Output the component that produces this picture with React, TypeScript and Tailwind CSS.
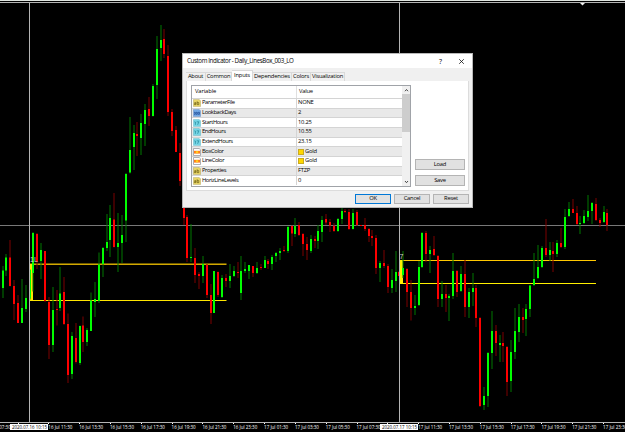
import { clsx } from "clsx";

// up?, high, body top, body bottom, low
const candles: [number, number, number, number, number][] = [
  [1, 266, 270.5, 288, 298], [1, 254, 257.5, 270.5, 276], [0, 240, 257.5, 286, 286.5], [0, 280, 286, 304, 320],
  [0, 295, 303, 323, 323], [1, 279, 308, 323, 323], [1, 285, 298, 309, 312], [1, 269.5, 270, 298, 299.5],
  [1, 232, 233, 273, 291.5], [0, 233, 234, 262, 269], [1, 243, 250, 261, 279], [0, 251, 251, 301, 302],
  [0, 297, 302, 345, 359], [1, 287, 310, 345, 352], [0, 290, 309, 310, 325.5], [1, 267, 293.5, 308, 311],
  [0, 277, 292, 324, 325], [0, 313.5, 324, 375, 383], [1, 332, 336, 374, 379], [0, 323, 338, 362, 363.5],
  [1, 325.5, 326, 363, 365], [0, 316.5, 325.5, 342, 352], [1, 328, 330, 342, 346], [1, 292.5, 300.5, 331, 331],
  [1, 282, 299, 302, 317], [1, 252.5, 264.5, 301, 303], [1, 247, 248, 264, 277], [1, 214, 242, 248, 251],
  [1, 205, 218, 240, 257], [0, 193, 219.5, 247, 247.5], [1, 213, 243, 247, 272], [1, 215, 235, 243, 263],
  [1, 173, 174, 220.5, 242], [1, 117, 150, 172.5, 173.5], [1, 125, 133, 147, 170], [0, 122, 134, 136, 156],
  [1, 114, 123, 138, 155], [1, 104, 110, 124, 146], [0, 97, 109, 116, 126], [1, 84, 86, 116, 116.5],
  [1, 36, 49, 85, 99], [1, 25, 40, 48, 61], [0, 29, 39, 54, 58], [0, 45, 56, 112, 116],
  [0, 109, 112, 131, 136], [0, 126, 130, 152, 152], [0, 143, 153, 181, 186], [0, 185, 190, 218, 225],
  [0, 215, 217, 258, 262], [1, 224, 257, 258, 262], [0, 248, 258, 275, 283], [0, 272, 274, 276, 289],
  [1, 256, 264, 276, 283], [0, 264, 265, 295, 298], [0, 284, 295, 313, 324], [1, 271, 271, 313, 313],
  [0, 271.5, 272, 295, 297], [1, 275, 278, 297, 298], [0, 274, 278, 281, 287], [1, 264, 276, 281, 288],
  [1, 266, 271, 276, 277], [0, 262, 272, 273, 278], [1, 256, 271, 293, 300], [1, 262, 269, 271, 273],
  [1, 265, 265, 271, 279], [0, 266, 266, 273, 277], [1, 262, 268, 273, 274], [0, 264, 267, 268, 270],
  [1, 256, 260, 268, 268], [0, 259, 261, 264, 269], [1, 255, 257, 264, 270], [1, 252, 253, 256, 262],
  [1, 248, 251, 253, 260], [0, 246, 250, 251, 252], [1, 226, 227, 251, 253], [0, 225.5, 226, 233.5, 246],
  [1, 218, 226, 234, 237], [0, 222, 225, 235, 236], [0, 233, 234, 244, 256], [0, 237, 244, 250, 260],
  [1, 235, 239, 251, 253], [0, 236, 239, 241, 248], [1, 225, 231, 241, 249], [1, 216, 220, 232, 242],
  [0, 214, 219, 222.5, 225], [0, 219, 222, 225.5, 232], [0, 223, 226, 231, 232], [1, 218, 219, 231, 232],
  [1, 208, 211, 219, 224], [0, 209, 211, 212, 213], [0, 209, 212, 229, 230], [1, 209, 213, 229, 229.5],
  [0, 210, 212, 225, 226], [0, 225, 225, 226, 226], [0, 218, 225, 229, 231], [0, 228, 229, 236, 242],
  [0, 230, 236, 238, 246], [0, 235, 238, 268, 274], [1, 261, 263, 268, 282], [0, 250, 263, 266, 268],
  [0, 264, 266, 287, 293], [1, 269, 280, 288, 293], [1, 251, 272, 281, 292], [0, 271, 272, 276, 276],
  [1, 251, 268, 275, 278], [0, 268, 269, 292, 307], [0, 280, 292, 308, 320.5], [1, 295, 306, 308, 315],
  [1, 261, 267, 305, 306], [1, 232, 233, 267, 268], [0, 231, 233, 254, 262], [1, 246, 250, 254, 273],
  [0, 236, 249, 255, 256], [0, 255, 256, 299, 307], [1, 281, 294, 299, 307], [0, 285, 294, 298, 312],
  [1, 294, 296, 298, 321], [1, 253, 271, 296, 299], [0, 270, 271, 292, 297], [1, 266, 274, 291, 292],
  [0, 260, 274, 307, 317], [1, 288, 292, 307, 318], [1, 273, 288, 292, 306], [0, 285, 288, 318, 327],
  [0, 317, 318, 406, 407], [1, 387, 396, 405, 410], [1, 352, 353, 396, 407], [1, 311, 331, 353, 369],
  [0, 325, 331, 343, 356], [1, 335, 343, 345, 362], [0, 332, 343, 346, 362], [0, 346, 347, 382, 396],
  [1, 340, 352, 381, 392], [1, 308, 331, 352, 359], [1, 304, 317, 332, 342], [0, 308, 317, 320, 333],
  [1, 304, 309, 319, 336], [1, 285, 285.5, 309, 317], [1, 253, 279, 285, 286], [1, 245, 267, 278, 279],
  [1, 246, 248, 267, 268], [0, 219, 248, 255, 257], [1, 242, 250, 255, 261], [0, 242, 251, 254, 272],
  [1, 240, 243, 254, 257], [0, 228, 243, 247, 248], [1, 209, 217, 247, 249], [1, 202, 209, 216, 217],
  [0, 199, 209, 213, 213], [0, 206, 213, 224, 225], [1, 216, 223, 224, 234], [1, 210, 216, 223, 224],
  [1, 195, 211, 217, 221], [1, 202, 203, 211, 224], [0, 198, 204, 220, 221], [0, 218, 220, 223, 227],
  [1, 206, 212, 222, 223], [0, 209, 213, 225, 231],
];

const timeLabels = [
  "16 Jul 07:30", "", "16 Jul 11:30", "16 Jul 13:30", "16 Jul 15:30", "16 Jul 17:30", "16 Jul 19:30",
  "16 Jul 21:30", "16 Jul 23:30", "17 Jul 01:30", "17 Jul 03:30", "17 Jul 05:30", "17 Jul 07:30", "",
  "17 Jul 11:30", "17 Jul 13:30", "17 Jul 15:30", "17 Jul 17:30", "17 Jul 19:30", "17 Jul 21:30", "17 Jul 23:30",
];

const tabs = [
  { label: "About", width: "w-[20px]" },
  { label: "Common", width: "w-[26px]" },
  { label: "Inputs", width: "w-[21px]", active: true },
  { label: "Dependencies", width: "w-[39px]" },
  { label: "Colors", width: "w-[19px]" },
  { label: "Visualization", width: "w-[34px]" },
];

const inputs = [
  { kind: "ab", name: "ParameterFile", value: "NONE" },
  { kind: "int", name: "LookbackDays", value: "2" },
  { kind: "num", name: "StartHours", value: "10.25" },
  { kind: "num", name: "EndHours", value: "10.55" },
  { kind: "num", name: "ExtendHours", value: "23.15" },
  { kind: "color", name: "BoxColor", value: "Gold" },
  { kind: "color", name: "LineColor", value: "Gold" },
  { kind: "ab", name: "Properties", value: "FTZP" },
  { kind: "ab", name: "HorizLineLevels", value: "0" },
];

const TypeIcon = ({ kind }: { kind: string }) => {
  if (kind === "color") {
    return (
      <svg className="w-2 h-2 shrink-0" viewBox="0 0 8 8">
        <path d="M.5.5h5.7l1.3 1.3v5.7h-7z" fill="#fff" stroke="#8c8c94" strokeWidth=".7" />
        <rect x="1" y="2.8" width="6" height="2.8" fill="#ff7a1c" />
        <rect x="2.8" y="3.2" width="2.4" height="2" fill="#ffd21c" />
      </svg>
    );
  }
  const fill = kind === "ab" ? "#e9d667" : kind === "int" ? "#72a9e6" : "#75d5e5";
  const ink = kind === "ab" ? "#5c4f08" : kind === "int" ? "#123f8c" : "#12778c";
  return (
    <svg className="w-2 h-2 shrink-0" viewBox="0 0 8 8">
      <path d="M.4.4h5.8l1.4 1.4v5.8H.4z" fill={fill} stroke={ink} strokeOpacity=".35" strokeWidth=".6" />
      {kind === "ab" && <path d="M1.4 3.6h1.5v2H1.4v-1h1.5M4.2 2.3v3.3h1.6V3.6H4.2" fill="none" stroke={ink} strokeWidth=".6" />}
      {kind === "int" && <path d="M1 3.3h1v2H1M2.8 5.3v-2h1.4v2zM5 3.3h1.5v2H5z" fill="none" stroke={ink} strokeWidth=".6" />}
      {kind === "num" && <path d="M1.4 2.8l1 .2v2.8M3.7 2.8h2.2L4.6 5.8" fill="none" stroke={ink} strokeWidth=".6" />}
    </svg>
  );
};

const DialogButton = ({ label, className }: { label: string; className: string }) => (
  <button type="button" className={clsx("flex items-center justify-center bg-[#e1e1e1] border leading-none", className)}>
    {label}
  </button>
);

const Chart = () => (
  <svg className="block w-[625px] h-[432px]" viewBox="0 0 625 432">
    <rect width="625" height="1" fill="#dfe4df" />
    <rect y="2" width="625" height="1" fill="#b4b4b4" />
    <path d="M580 3h5l-2.5 2.5z" fill="#f0f0f0" />
    <rect y="225" width="625" height="1" fill="#787878" />

    <rect x="30" y="263" width="196.5" height="1" fill="#6e5a00" />
    <rect x="30" y="264" width="196.5" height="1" fill="#d2a800" />
    <rect x="30" y="300" width="196.5" height="1" fill="#ffe600" />
    <rect x="30" y="264" width="3" height="37" fill="#ffe600" />
    <rect x="400" y="260" width="196" height="1" fill="#ffc800" />
    <rect x="400" y="283" width="196" height="1" fill="#fff000" />
    <rect x="400" y="260" width="3" height="24" fill="#fff000" />

    {candles.map(([up, high, top, bottom, low], i) => {
      const x = Math.round(1.6 + i * 3.852);
      return (
        <g key={i}>
          <rect x={x + 0.5} y={high} width="1" height={low - high} fill={up ? "#007800" : "#7d0000"} />
          <rect x={x} y={top} width="2" height={Math.max(1, bottom - top)} fill={up ? "#00ff00" : "#ff0000"} />
        </g>
      );
    })}

    <g fill="#d0d0d0" fontFamily="'Liberation Sans', sans-serif" fontSize="7">
      <text x="30" y="262">1L</text>
      <text x="399.5" y="258.5">7</text>
    </g>
    <rect x="29" y="2" width="1" height="421" fill="#b4b4b4" />
    <rect x="399" y="2" width="1" height="421" fill="#b4b4b4" />

    <rect y="422" width="625" height="1" fill="#b4b4b4" />
    <g fontFamily="'Open Sans', sans-serif" fontSize="5.8">
      {timeLabels.map((label, i) => (
        <g key={i} fill="#fff">
          <rect x={Math.round(-13.3 + i * 30.82)} y="423" width="1" height="1" />
          <text x={-13.3 + i * 30.82} y="429" textLength="24" lengthAdjust="spacingAndGlyphs">{label}</text>
        </g>
      ))}
      <rect x="10" y="424" width="38" height="6" fill="#fff" />
      <rect x="380" y="424" width="38" height="6" fill="#fff" />
      <text x="12" y="429" textLength="35" lengthAdjust="spacingAndGlyphs">2020.07.16 10:15</text>
      <text x="382" y="429" textLength="35" lengthAdjust="spacingAndGlyphs">2020.07.17 10:15</text>
    </g>
  </svg>
);

const IndicatorDialog = () => (
  <div className="absolute left-[182px] top-[53px] w-[291px] h-[155px] flex flex-col bg-[#f0f0f0] border border-[#b8b8b8] text-[5.8px] tracking-[-0.22px] leading-none text-black">
    <div className="h-[14px] shrink-0 flex items-center bg-white pl-1">
      <span className="flex-1 text-[6.2px] tracking-[-0.38px] pt-px">Custom Indicator - Daily_LinesBox_003_LO</span>
      <span className="w-[20px] text-[7px]">?</span>
      <svg className="w-[5px] h-[5px] mr-2" viewBox="0 0 5 5">
        <path d="M.2.2l4.6 4.6M4.8.2L.2 4.8" stroke="#111" strokeWidth=".8" />
      </svg>
    </div>

    <div className="h-[13px] shrink-0 flex items-end pl-[3px]">
      {tabs.map((tab) => (
        <div
          key={tab.label}
          className={clsx(
            "flex items-center justify-center whitespace-nowrap border-t border-r border-[#d9d9d9]",
            tab.width,
            tab.active ? "h-[11px] bg-white" : "h-[9px] bg-[#f0f0f0]"
          )}
        >
          {tab.label}
        </div>
      ))}
    </div>

    <div className="mx-[3px] h-[110px] shrink-0 flex bg-white border border-t-0 border-[#dcdcdc] pl-1 pt-1">
      <div className="w-[220px] h-[102px] flex border border-[#a0a3a8]">
        <div className="flex-1 flex flex-col">
          <div className="h-[12px] shrink-0 flex items-center">
            <span className="w-[104px] pl-[3px] tracking-[-0.1px]">Variable</span>
            <span className="h-full flex items-center pl-[2px] border-l border-[#e0e0e0]">Value</span>
          </div>
          {inputs.map((row, i) => (
            <div
              key={row.name}
              className={clsx(
                "h-[9.66px] shrink-0 flex items-center border-t border-[#d4d4d4]",
                i % 2 ? "bg-[#e9e9e9]" : "bg-white"
              )}
            >
              <div className="w-[104px] flex items-center gap-px pl-px tracking-[-0.4px]">
                <TypeIcon kind={row.kind} />
                <span>{row.name}</span>
              </div>
              <div className="h-full flex items-center gap-px pl-px border-l border-[#d4d4d4]">
                {row.kind === "color" && <span className="w-[6px] h-[6px] bg-[#ffd700] border border-[#c9aa20]" />}
                <span>{row.value}</span>
              </div>
            </div>
          ))}
        </div>
        <div className="w-2 shrink-0 flex flex-col items-center bg-[#f0f0f0]">
          <svg className="w-[5px] h-[8px]" viewBox="0 0 5 8">
            <path d="M1 5.2l1.5-1.7L4 5.2" fill="none" stroke="#333" strokeWidth=".9" />
          </svg>
          <div className="w-full h-[38px] bg-[#cdcdcd]" />
          <svg className="w-[5px] h-[8px] mt-auto" viewBox="0 0 5 8">
            <path d="M1 3l1.5 1.7L4 3" fill="none" stroke="#333" strokeWidth=".9" />
          </svg>
        </div>
      </div>
      <div className="ml-1 mb-[4px] flex flex-col justify-end gap-[5px]">
        <DialogButton label="Load" className="w-[50px] h-[11px] border-[#b4b4b4]" />
        <DialogButton label="Save" className="w-[50px] h-[11px] border-[#b4b4b4]" />
      </div>
    </div>

    <div className="flex-1 flex items-start justify-end gap-[3px] pr-[3px] pt-[3px]">
      <DialogButton label="OK" className="w-[36px] h-[10px] border-[#0078d7]" />
      <DialogButton label="Cancel" className="w-[36px] h-[10px] border-[#b4b4b4]" />
      <DialogButton label="Reset" className="w-[36px] h-[10px] border-[#b4b4b4]" />
    </div>
  </div>
);

export default function App() {
  return (
    <div className="relative w-[625px] h-[432px] overflow-hidden bg-black font-['Open_Sans',sans-serif]">
      <Chart />
      <IndicatorDialog />
    </div>
  );
}
